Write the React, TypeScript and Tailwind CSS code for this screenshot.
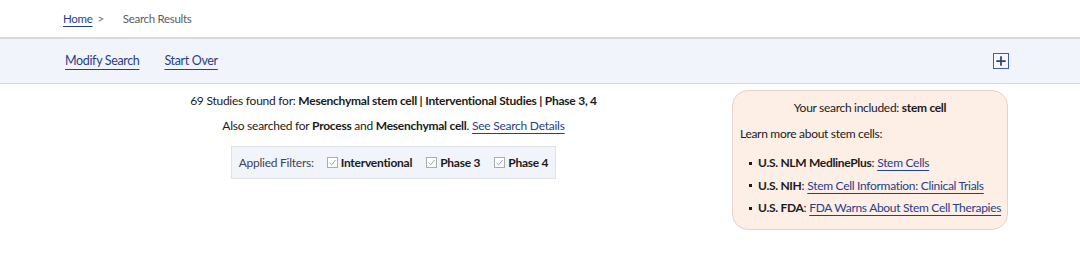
import { Plus } from "lucide-react";

const links = [
  { source: "U.S. NLM MedlinePlus", label: "Stem Cells" },
  { source: "U.S. NIH", label: "Stem Cell Information: Clinical Trials" },
  { source: "U.S. FDA", label: "FDA Warns About Stem Cell Therapies" },
];

const filters = ["Interventional", "Phase 3", "Phase 4"];

const CheckBox = () => (
  <span className="inline-flex items-center justify-center w-[11px] h-[11px] border border-[#a9aeb1] bg-white mr-[3px]">
    <svg width="9" height="9" viewBox="0 0 9 9" fill="none">
      <path d="M1.5 4.8 L3.6 6.8 L7.6 2" stroke="#9ca3a8" strokeWidth="1" />
    </svg>
  </span>
);

const App = () => {
  return (
    <div className="w-[1080px] h-[277px] bg-white text-[#1b1b1b]" style={{ fontFamily: "Lato, 'Open Sans', sans-serif" }}>
      {/* Breadcrumb */}
      <div className="h-[37px] flex items-center pl-[63px] text-[11.5px] tracking-[-0.3px]">
        <a href="#" className="text-[#27408b] underline underline-offset-[3px] decoration-[#27408b]">
          Home
        </a>
        <span className="text-[#71767a] ml-[5px]">&gt;</span>
        <span className="text-[#5c5c5c] ml-[19px]">Search Results</span>
      </div>

      {/* Action bar */}
      <div className="h-[47px] bg-[#f1f4fa] border-t-2 border-b border-[#d9dadc] flex items-center pl-[65px] pr-[71px] text-[12.5px] tracking-[-0.35px]">
        <a href="#" className="text-[#27408b] underline underline-offset-[4px] decoration-[#27408b]">
          Modify Search
        </a>
        <a href="#" className="text-[#27408b] underline underline-offset-[4px] decoration-[#27408b] ml-[25px]">
          Start Over
        </a>
        <button className="ml-auto w-[16px] h-[16px] border border-[#3e5ea8] flex items-center justify-center bg-white/40">
          <Plus size={14} strokeWidth={3} className="text-[#27408b]" />
        </button>
      </div>

      {/* Main */}
      <div className="flex pl-[63px] pr-[72px] pt-[6px] text-[12px] tracking-[-0.25px]">
        <div className="flex-1 flex flex-col items-center">
          <p className="mt-[2px]">
            69 Studies found for: <b>Mesenchymal stem cell | Interventional Studies | Phase 3, 4</b>
          </p>
          <p className="mt-[7px]">
            Also searched for <b>Process</b> and <b>Mesenchymal cell</b>.{" "}
            <a href="#" className="text-[#27408b] underline underline-offset-[3px] decoration-[#27408b]">
              See Search Details
            </a>
          </p>
          <div className="mt-[11px] bg-[#f1f4fa] border border-[#dfe1e2] h-[33px] px-[7px] flex items-center">
            <span className="text-[#3d4551] mr-[13px]">Applied Filters:</span>
            {filters.map((f) => (
              <span key={f} className="flex items-center font-bold mr-[14px] last:mr-0">
                <CheckBox />
                {f}
              </span>
            ))}
          </div>
        </div>

        <div className="w-[276px] ml-[8px] bg-[#fdeee6] border border-[#e5d3ca] rounded-[16px] px-[7px] pt-[8px] pb-[12px] tracking-[-0.3px]">
          <p className="text-center">
            Your search included: <b>stem cell</b>
          </p>
          <p className="mt-[8px]">Learn more about stem cells:</p>
          <ul className="mt-[11px] pl-[9px] flex flex-col gap-[4.5px]">
            {links.map((l) => (
              <li key={l.source} className="flex items-center whitespace-nowrap">
                <span className="w-[3px] h-[3px] bg-[#1b1b1b] mr-[6px] shrink-0" />
                <b>{l.source}</b>:
                <a href="#" className="ml-[3px] text-[#27408b] underline underline-offset-[3px] decoration-[#27408b]">
                  {l.label}
                </a>
              </li>
            ))}
          </ul>
        </div>
      </div>
    </div>
  );
};

export default App;
